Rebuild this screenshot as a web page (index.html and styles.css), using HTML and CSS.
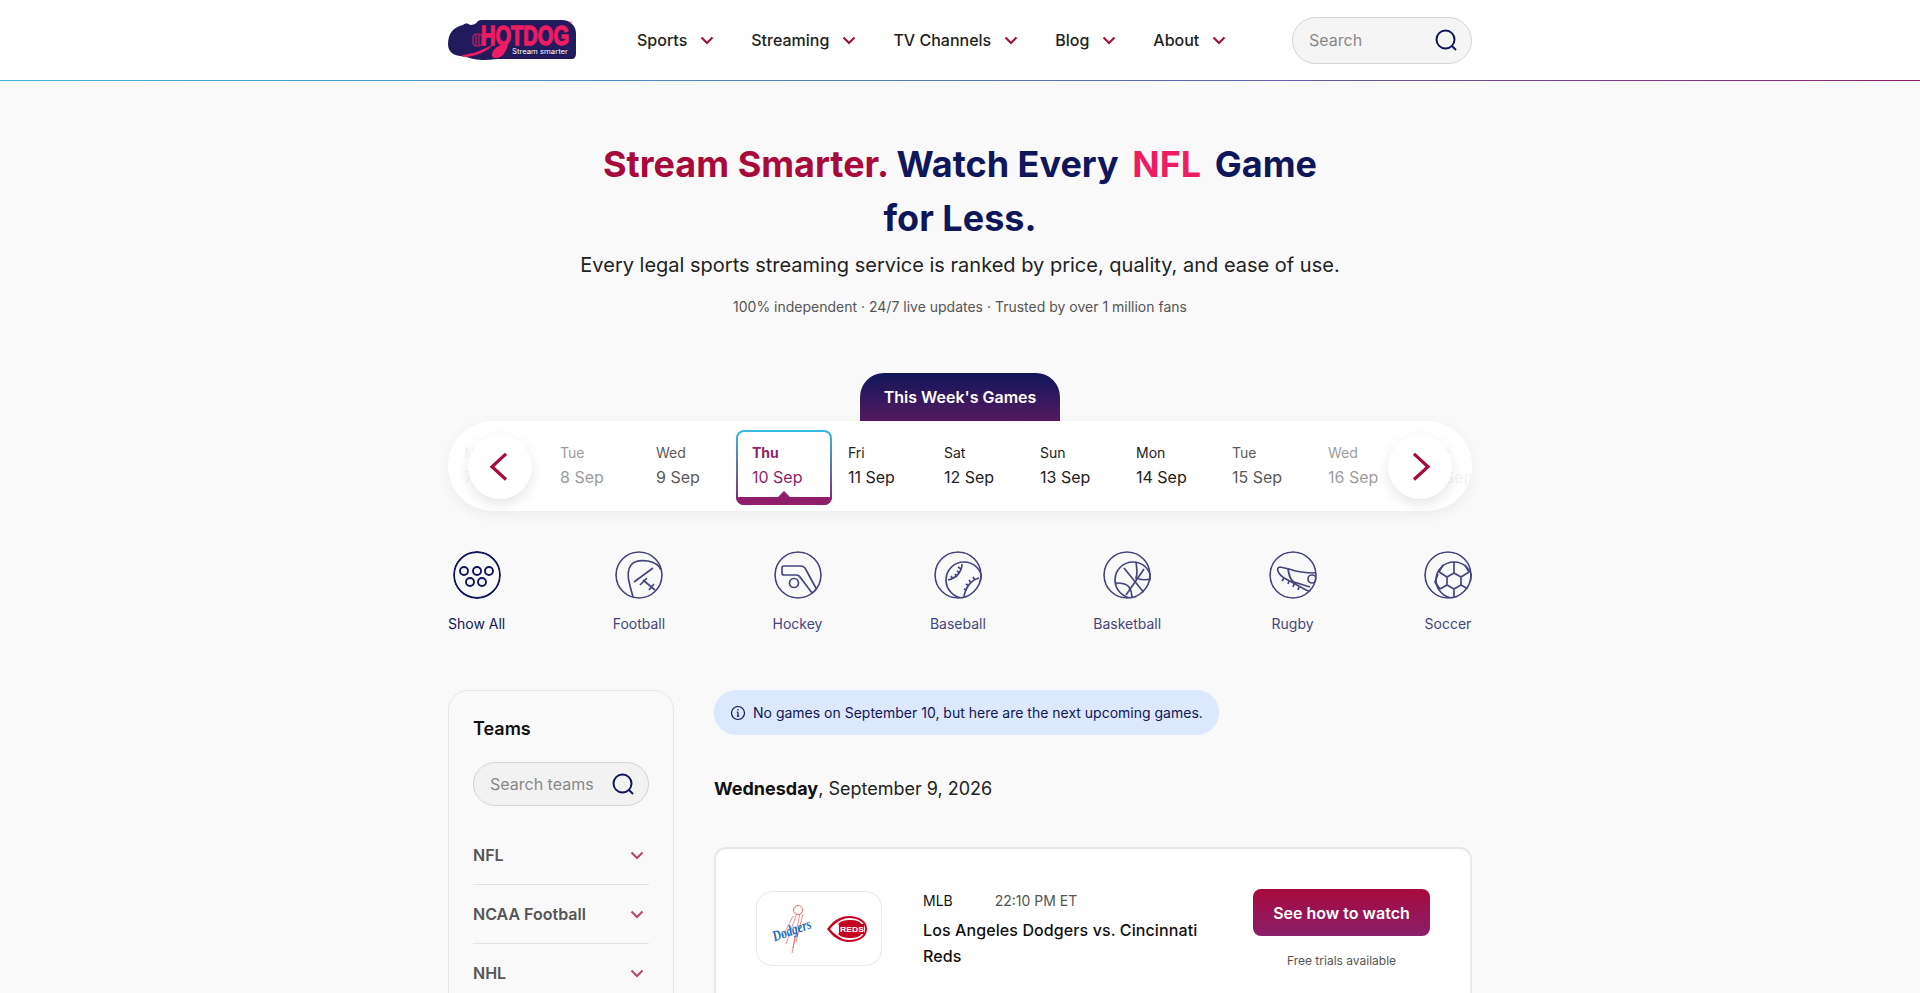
FILE: index.html
```html
<!DOCTYPE html>
<html lang="en">
<head>
    <meta charset="UTF-8">
    <meta name="viewport" content="width=device-width, initial-scale=1.0">
    <title>Hotdog - Stream Smarter</title>
    <link rel="stylesheet" href="styles.css">
</head>
<body>
    <header class="site-header">
        <div class="header-inner">
            <a class="logo" href="#">
                <svg width="128" height="40" viewBox="0 0 128 40">
                    <path fill="#211a5c" d="M0 24C0 14 5 7 15 5c2-2 5-2 7 0 3 0 6-1 8-4 1-1 3-1 4-1h80c8 0 14 6 14 13v21c0 3-2 5-4 5H52c-7 0-8 1-18 1-8 0-13-3-22-4C4 35 0 31 0 24z"/>
                    <text class="logo-word" x="33" y="25" textLength="88" lengthAdjust="spacingAndGlyphs">HOTDOG</text>
                    <text class="logo-tag" x="64" y="34" textLength="56" lengthAdjust="spacingAndGlyphs">Stream smarter</text>
                    <text class="logo-reg" x="121" y="5">®</text>
                    <path fill="#ee1c62" d="M14 35c12-1 22-6 32-11 -6 7-18 13-31 13zM44 34c1-6 8-10 16-10 -1 7-6 14-12 14-3 0-5-2-4-4z"/>
                    <rect x="25" y="14" width="9" height="12" rx="3" fill="none" stroke="#ee1c62" stroke-width="1"/>
                    <path stroke="#ee1c62" stroke-width="1" d="M28 15v10M31 15v10"/>
                </svg>
            </a>
            <nav class="main-nav">
                <a href="#">Sports <svg class="chevron" viewBox="0 0 24 24"><path d="M6.5 9.5 12 15l5.5-5.5"/></svg></a>
                <a href="#">Streaming <svg class="chevron" viewBox="0 0 24 24"><path d="M6.5 9.5 12 15l5.5-5.5"/></svg></a>
                <a href="#">TV Channels <svg class="chevron" viewBox="0 0 24 24"><path d="M6.5 9.5 12 15l5.5-5.5"/></svg></a>
                <a href="#">Blog <svg class="chevron" viewBox="0 0 24 24"><path d="M6.5 9.5 12 15l5.5-5.5"/></svg></a>
                <a href="#">About <svg class="chevron" viewBox="0 0 24 24"><path d="M6.5 9.5 12 15l5.5-5.5"/></svg></a>
            </nav>
            <div class="search-box header-search">
                <span>Search</span>
                <svg class="search-icon" viewBox="0 0 24 24"><circle cx="11.5" cy="11.5" r="9"/><path d="m18 18 4 4"/></svg>
            </div>
        </div>
    </header>

    <main class="container">
        <section class="hero">
            <h1><span class="brand">Stream Smarter.</span> Watch Every <span class="league">NFL</span> Game for Less.</h1>
            <p class="hero-sub">Every legal sports streaming service is ranked by price, quality, and ease of use.</p>
            <p class="hero-note">100% independent · 24/7 live updates · Trusted by over 1 million fans</p>
        </section>

        <section class="week">
            <div class="week-tab">This Week's Games</div>
            <div class="date-bar">
                <div class="date-track">
                    <div class="date-item fade-4"><span>Mon</span><strong>7 Sep</strong></div>
                    <div class="date-item fade-2"><span>Tue</span><strong>8 Sep</strong></div>
                    <div class="date-item fade-1"><span>Wed</span><strong>9 Sep</strong></div>
                    <div class="date-item active"><span>Thu</span><strong>10 Sep</strong></div>
                    <div class="date-item"><span>Fri</span><strong>11 Sep</strong></div>
                    <div class="date-item"><span>Sat</span><strong>12 Sep</strong></div>
                    <div class="date-item"><span>Sun</span><strong>13 Sep</strong></div>
                    <div class="date-item"><span>Mon</span><strong>14 Sep</strong></div>
                    <div class="date-item fade-1"><span>Tue</span><strong>15 Sep</strong></div>
                    <div class="date-item fade-2"><span>Wed</span><strong>16 Sep</strong></div>
                    <div class="date-item fade-4"><span>Thu</span><strong>17 Sep</strong></div>
                </div>
                <button class="date-arrow arrow-prev" type="button"><svg viewBox="0 0 24 24"><path d="M16.5 2.2 6 11.8l10.5 9.6"/></svg></button>
                <button class="date-arrow arrow-next" type="button"><svg viewBox="0 0 24 24"><path d="m7.5 2.2 10.5 9.6-10.5 9.6"/></svg></button>
            </div>
        </section>

        <section class="sports">
            <a class="sport current" href="#">
                <svg class="sport-icon" viewBox="0 0 48 48">
                    <circle cx="24" cy="24" r="23"/>
                    <circle cx="11" cy="20" r="4"/><circle cx="24" cy="20" r="4"/><circle cx="36" cy="20" r="4"/>
                    <circle cx="17" cy="31" r="4"/><circle cx="29" cy="31" r="4"/>
                </svg>
                Show All
            </a>
            <a class="sport" href="#">
                <svg class="sport-icon" viewBox="0 0 48 48">
                    <circle cx="24" cy="24" r="23"/>
                    <path d="M46 19c-2-5-7-8-13-9-8-1-14 0-17 4-4 5-3 14-1 21l3 11"/>
                    <path d="M38 17 19 31M28 29l12 10M25 34l7-7M34 39l5-6"/>
                </svg>
                Football
            </a>
            <a class="sport" href="#">
                <svg class="sport-icon" viewBox="0 0 48 48">
                    <circle cx="24" cy="24" r="23"/>
                    <path d="M10 15h17c2 0 3 1 4 2l12 22-5 3-12-16c-1-2-2-2-4-2H10c-1 0-2-1-2-2v-5c0-1 1-2 2-2z"/>
                    <circle cx="20" cy="32" r="4.5"/>
                </svg>
                Hockey
            </a>
            <a class="sport" href="#">
                <svg class="sport-icon" viewBox="0 0 48 48">
                    <circle cx="24" cy="24" r="23"/>
                    <circle cx="30" cy="29" r="18"/>
                    <path d="M28 13c0 7-5 14-14 16M24 16l3 2M23 20l3 2M21 23l2 3M17 25l2 3"/>
                    <path d="M45 27c-8 2-14 10-15 19M39 26l2 3M35 29l2 3M32 33l3 2M30 38l3 1"/>
                </svg>
                Baseball
            </a>
            <a class="sport" href="#">
                <svg class="sport-icon" viewBox="0 0 48 48">
                    <circle cx="24" cy="24" r="23"/>
                    <circle cx="30" cy="29" r="18"/>
                    <path d="m21 17 21 26M41 18 23 44M33 11c1 7 1 14 0 16 4 2 10 2 15 1M13 32c6 0 11 1 13 4 2 3 3 6 3 10"/>
                </svg>
                Basketball
            </a>
            <a class="sport" href="#">
                <svg class="sport-icon" viewBox="0 0 48 48">
                    <circle cx="24" cy="24" r="23"/>
                    <path d="M11 16c-2 0-3 2-2 4 1 3 4 6 8 8l20 11 6 2M11 16l9 2c8 3 17 4 27 4M19 18c1 6 2 11 6 13l16 5"/>
                    <path d="m15 27-2 3M20 30l-1 3M25 33l-1 3M30 36l-1 3"/>
                    <circle cx="43" cy="28" r="4"/>
                </svg>
                Rugby
            </a>
            <a class="sport" href="#">
                <svg class="sport-icon" viewBox="0 0 48 48">
                    <circle cx="24" cy="24" r="23"/>
                    <circle cx="30" cy="29" r="18"/>
                    <path d="m30 22 7 4v8l-7 4-7-4v-8zM23 26l-8-5M15 21l4-7M37 26l8-5M45 21l-4-7M23 34l-7 4M16 38l-5-7 3-8M37 34l7 4M30 38v8M30 22v-11"/>
                </svg>
                Soccer
            </a>
        </section>

        <div class="columns">
            <aside class="sidebar">
                <h3>Teams</h3>
                <div class="search-box team-search">
                    <span>Search teams</span>
                    <svg class="search-icon" viewBox="0 0 24 24"><circle cx="11.5" cy="11.5" r="9"/><path d="m18 18 4 4"/></svg>
                </div>
                <div class="league-row">NFL <svg class="chevron" viewBox="0 0 24 24"><path d="M6.5 9.5 12 15l5.5-5.5"/></svg></div>
                <div class="league-row">NCAA Football <svg class="chevron" viewBox="0 0 24 24"><path d="M6.5 9.5 12 15l5.5-5.5"/></svg></div>
                <div class="league-row">NHL <svg class="chevron" viewBox="0 0 24 24"><path d="M6.5 9.5 12 15l5.5-5.5"/></svg></div>
            </aside>

            <div class="games">
                <div class="notice">
                    <svg viewBox="0 0 16 16"><circle cx="8" cy="8" r="6.5"/><path d="M8 7.2v4M6.8 11.2h2.4M6.8 7.2H8"/><circle class="dot" cx="8" cy="4.8" r=".8"/></svg>
                    No games on September 10, but here are the next upcoming games.
                </div>
                <h2 class="day-title"><b>Wednesday</b>, September 9, 2026</h2>
                <article class="game-card">
                    <div class="team-logos">
                        <svg width="42" height="50" viewBox="0 0 42 50">
                            <path class="ball-lines" d="M26 9 15 40M29 9 22 44M32 10l-7 28M22 12 11 34M24 34l-3 15"/>
                            <circle cx="27" cy="6" r="4.5" fill="#fff" stroke="#ef3e42" stroke-width=".8"/>
                            <text class="dodgers" x="1" y="31" textLength="40" lengthAdjust="spacingAndGlyphs" transform="rotate(-20 21 27)">Dodgers</text>
                        </svg>
                        <svg width="40" height="26" viewBox="0 0 40 26">
                            <path fill="#c6011f" d="M0 13C6 5 13 0 22 0c10 0 18 5 18 13s-8 13-18 13C13 26 6 21 0 13z"/>
                            <path fill="#fff" d="M3 13c5-6 12-11 19-11 9 0 16 4 16 11s-7 11-16 11C15 24 8 19 3 13z"/>
                            <path fill="#c6011f" d="M12 7c2-2 6-3 11-3 6 0 10 1 12 5H12c-1 0-1-1 0-2zM12 17h23c-2 4-6 5-12 5-5 0-9-1-11-3-1-1-1-2 0-2z"/>
                            <rect x="12" y="8" width="25" height="10" fill="#c6011f"/>
                            <text class="reds" x="13" y="16" textLength="24" lengthAdjust="spacingAndGlyphs">REDS</text>
                        </svg>
                    </div>
                    <div class="game-info">
                        <div class="game-meta"><span>MLB</span><span class="game-time">22:10 PM ET</span></div>
                        <div class="game-title">Los Angeles Dodgers vs. Cincinnati Reds</div>
                    </div>
                    <div class="game-cta">
                        <a class="watch-btn" href="#">See how to watch</a>
                        <small>Free trials available</small>
                    </div>
                </article>
            </div>
        </div>
    </main>
</body>
</html>
```

FILE: styles.css
```css
* { margin: 0; padding: 0; box-sizing: border-box; }
html, body { height: 100%; overflow: hidden; }
body { font-family: Inter, "Noto Sans", sans-serif; background: #f9f9fa; color: #111; }
a { color: inherit; text-decoration: none; }

.site-header { height: 81px; background: #fff; border-bottom: 1px solid; border-image: linear-gradient(90deg, #3fb4de 0%, #5b6bb0 60%, #8f1f6a 100%) 1; }
.header-inner { width: 1024px; height: 80px; margin: 0 auto; display: flex; align-items: center; }
.logo { display: flex; margin-right: 61px; }
.logo-word { font-family: "Liberation Sans", sans-serif; font-weight: 700; font-size: 28px; fill: #ee1c62; stroke: #ee1c62; stroke-width: 1.4px; }
.logo-tag { font-family: Inter, sans-serif; font-size: 7px; fill: #fff; }
.logo-reg { font-family: Inter, sans-serif; font-size: 5px; fill: #ee1c62; }

.main-nav { display: flex; gap: 32px; }
.main-nav a { display: flex; align-items: center; gap: 8px; font-size: 16px; font-weight: 500; color: #222; }
.chevron { width: 24px; height: 24px; fill: none; stroke: #a80a3c; stroke-width: 2; }

.search-box { display: flex; align-items: center; justify-content: space-between; border: 1px solid #d4d4d4; border-radius: 24px; background: #f5f5f5; color: #888; font-size: 16px; }
.header-search { width: 180px; height: 47px; margin-left: auto; padding: 0 13px 0 16px; }
.search-icon { width: 24px; height: 24px; fill: none; stroke: #10165a; stroke-width: 2; }

.container { width: 1024px; margin: 0 auto; }

.hero { padding-top: 56px; text-align: center; }
.hero h1 { max-width: 768px; margin: 0 auto; font-size: 36px; line-height: 54px; font-weight: 700; color: #10165a; }
.brand { color: #a80a3c; }
.league { color: #ee1c62; margin: 0 5px; }
.hero-sub { margin-top: 5px; font-size: 20px; line-height: 30px; color: #222; }
.hero-note { margin-top: 16px; font-size: 14px; line-height: 21px; color: #555; }

.week { margin-top: 56px; }
.week-tab { width: 200px; height: 48px; margin: 0 auto; display: flex; align-items: center; justify-content: center; border-radius: 24px 24px 0 0; background: linear-gradient(180deg, #10165a 0%, #561a60 100%); color: #fff; font-size: 16px; font-weight: 600; }
.date-bar { position: relative; height: 90px; border-radius: 45px; background: #fff; box-shadow: 0 4px 14px rgba(0,0,0,0.05); }
.date-track { height: 100%; display: flex; align-items: center; overflow: hidden; border-radius: 45px; }
.date-item { flex: 0 0 96px; height: 75px; margin-top: 3px; padding: 10px 16px 0; border: 2px solid transparent; border-radius: 8px; color: #222; }
.date-item span { display: block; font-size: 14px; line-height: 21px; margin-left: -2px; }
.date-item strong { display: block; font-size: 16px; line-height: 24px; font-weight: 400; margin: 2px 0 0 -2px; white-space: nowrap; }
.fade-1 { opacity: .75; }
.fade-2 { opacity: .45; }
.fade-4 { opacity: .06; }
.date-item.active { position: relative; color: #8f1f6a; border-color: transparent; background-image: linear-gradient(#fff, #fff), linear-gradient(180deg, #35bce6 0%, #8f1f6a 100%); background-origin: border-box; background-clip: padding-box, border-box; }
.date-item.active span { font-weight: 700; }
.date-item.active::after { content: ""; position: absolute; left: -2px; right: -2px; bottom: -2px; height: 8px; background: #8f1f6a; border-radius: 0 0 8px 8px; }
.date-item.active::before { content: ""; position: absolute; left: 50%; bottom: 6px; margin-left: -6px; border: 6px solid transparent; border-top: 0; border-bottom: 6px solid #8f1f6a; }
.date-arrow { position: absolute; top: 14px; width: 64px; height: 64px; display: flex; align-items: center; justify-content: center; border: 0; border-radius: 50%; background: #fff; box-shadow: 0 5px 14px rgba(0,0,0,0.1); }
.date-arrow svg { width: 32px; height: 32px; fill: none; stroke: #a80a3c; stroke-width: 2.4; }
.arrow-prev { left: 20px; }
.arrow-next { right: 20px; }

.sports { margin-top: 40px; display: flex; justify-content: space-between; }
.sport { display: flex; flex-direction: column; align-items: center; gap: 14px; font-size: 14px; line-height: 21px; color: #45457e; }
.sport.current { color: #10165a; }
.sport-icon { width: 48px; height: 48px; fill: none; stroke: currentColor; stroke-width: 1.7; overflow: hidden; border-radius: 50%; }
.sport.current .sport-icon { stroke-width: 1.9; }

.columns { margin-top: 56px; display: grid; grid-template-columns: 226px 758px; column-gap: 40px; align-items: start; }
.sidebar { padding: 24px; height: 400px; border: 1px solid #e6e6e6; border-radius: 20px; background: #f9f9f9; }
.sidebar h3 { font-size: 18px; line-height: 27px; font-weight: 600; color: #111; }
.team-search { height: 44px; margin-top: 20px; margin-bottom: 20px; padding: 0 13px 0 16px; background: #f2f2f2; }
.league-row { height: 59px; display: flex; align-items: center; justify-content: space-between; border-bottom: 1px solid #e2e2e2; font-size: 16px; font-weight: 600; color: #555; }
.league-row .chevron { stroke: #b8456f; }

.notice { display: inline-flex; align-items: center; gap: 7px; height: 45px; padding: 0 16px; border-radius: 22px; background: #dbe8fd; font-size: 14px; color: #10165a; }
.notice svg { width: 16px; height: 16px; fill: none; stroke: #10165a; stroke-width: 1.2; }
.notice .dot { fill: #10165a; stroke: none; }
.day-title { margin-top: 40px; font-size: 18px; line-height: 27px; font-weight: 400; color: #222; }
.day-title b { font-weight: 700; color: #111; }

.game-card { margin-top: 45px; padding: 41px 40px 40px; display: flex; align-items: flex-start; border: 2px solid #e8e8e8; border-radius: 12px; background: #fff; }
.team-logos { flex: 0 0 126px; height: 75px; margin-top: 1px; display: flex; align-items: center; justify-content: center; gap: 14px; border: 1px solid #e8e8e8; border-radius: 16px; }
.ball-lines { fill: none; stroke: #ef3e42; stroke-width: .6; }
.dodgers { font-family: "Liberation Serif", serif; font-style: italic; font-weight: 700; font-size: 15px; fill: #1a6db5; }
.reds { font-family: "Liberation Sans", sans-serif; font-weight: 700; font-size: 8px; fill: #fff; }
.game-info { flex: 1; margin: 0 40px 0 41px; }
.game-meta { display: flex; gap: 42px; font-size: 14px; line-height: 21px; }
.game-time { color: #555; }
.game-title { margin-top: 6px; font-size: 16px; line-height: 26px; font-weight: 500; letter-spacing: .1px; color: #111; }
.game-cta { flex: 0 0 177px; margin-top: -1px; margin-left: -1px; text-align: center; }
.watch-btn { display: flex; height: 47px; align-items: center; justify-content: center; border-radius: 8px; background: linear-gradient(180deg, #a80a3c 0%, #8a1f6c 100%); color: #fff; font-size: 16px; font-weight: 600; }
.game-cta small { display: block; margin-top: 16px; font-size: 12px; line-height: 18px; color: #555; }
```
